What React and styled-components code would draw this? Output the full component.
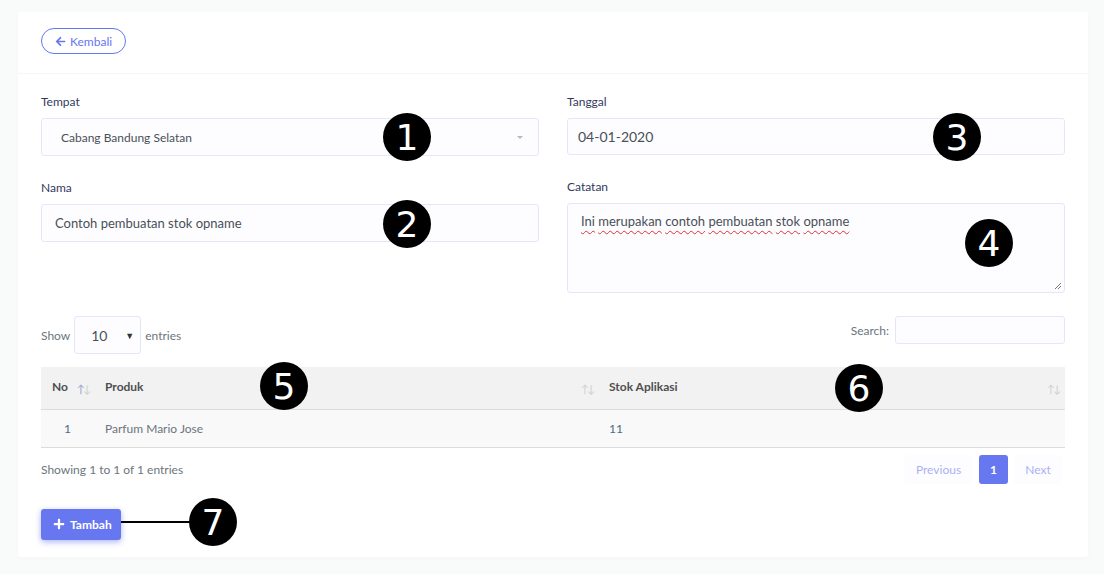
import React from "react";
import styled, { createGlobalStyle } from "styled-components";

const GlobalStyle = createGlobalStyle`
  html, body { margin: 0; padding: 0; }
  body {
    background: #f9fafa;
    font-family: "Lato", "Noto Sans", sans-serif;
    color: #34395e;
  }
  * { box-sizing: border-box; }
`;

const Page = styled.div`
  position: relative;
  width: 1104px;
  height: 574px;
  padding: 12px 16px 0 18px;
`;

const Card = styled.div`
  background: #fff;
  border-radius: 3px;
  width: 1070px;
  height: 545px;
  box-shadow: 0 2px 4px rgba(0, 0, 0, 0.02);
`;

const CardHeader = styled.div`
  height: 62px;
  padding: 16px 23px 0;
  border-bottom: 1px solid #f6f6f8;
`;

const OutlineButton = styled.button`
  display: inline-flex;
  align-items: center;
  gap: 4px;
  height: 26px;
  padding: 0 13px 0 13px;
  border: 1px solid #6777ef;
  border-radius: 14px;
  background: #fff;
  color: #6777ef;
  font-family: inherit;
  font-size: 12px;
  cursor: pointer;
`;

const CardBody = styled.div`
  padding: 20px 23px 0;
`;

const FormGrid = styled.div`
  display: grid;
  grid-template-columns: 498px 498px;
  column-gap: 28px;
  margin-bottom: 23px;
`;

const Column = styled.div`
  display: flex;
  flex-direction: column;
  gap: 24px;
`;

const Group = styled.div`
  display: flex;
  flex-direction: column;
  gap: 8px;
`;

const Label = styled.label`
  font-size: 12px;
  line-height: 16px;
  color: #34395e;
`;

const Field = styled.div`
  position: relative;
  display: flex;
  align-items: ${(p) => (p.$multi ? "flex-start" : "center")};
  height: ${(p) => p.$h || 38}px;
  padding: ${(p) => (p.$multi ? "9px 13px" : `0 ${p.$pad || 13}px`)};
  background: #fdfdff;
  border: 1px solid #e4e6fc;
  border-radius: 3px;
  font-size: ${(p) => p.$fs || 13}px;
  color: #495057;
`;

const Caret = styled.span`
  position: absolute;
  right: 15px;
  top: 50%;
  margin-top: -1px;
  width: 0;
  height: 0;
  border-left: 3px solid transparent;
  border-right: 3px solid transparent;
  border-top: 3px solid #b9b9b9;
`;

const Resize = styled.svg`
  position: absolute;
  right: 2px;
  bottom: 2px;
`;

const Wavy = styled.span`
  text-decoration: underline wavy #e03131;
  text-decoration-thickness: 1px;
  text-underline-offset: 4px;
`;

const Controls = styled.div`
  display: flex;
  justify-content: space-between;
  align-items: flex-start;
  margin-bottom: 13px;
  font-size: 12px;
  color: #6c757d;
`;

const Inline = styled.div`
  display: flex;
  align-items: center;
  gap: ${(p) => p.$gap || 4}px;
`;

const SmallSelect = styled.div`
  display: flex;
  align-items: center;
  justify-content: space-between;
  width: 67px;
  height: 38px;
  padding: 0 6px 0 16px;
  background: #fdfdff;
  border: 1px solid #e4e6fc;
  border-radius: 3px;
  font-size: 14px;
  color: #495057;
`;

const BlackCaret = styled.span`
  font-size: 9px;
  color: #333;
`;

const SearchInput = styled.div`
  width: 170px;
  height: 28px;
  background: #fdfdff;
  border: 1px solid #e4e6fc;
  border-radius: 3px;
`;

const Table = styled.table`
  width: 100%;
  border-collapse: collapse;
  font-size: 12px;
`;

const Th = styled.th`
  position: relative;
  height: 42px;
  background: #f2f2f2;
  border-bottom: 1px solid #dcdcdc;
  text-align: left;
  font-weight: 700;
  color: #4f4f4f;
  padding: 0 10px 2px ${(p) => p.$pl || 10}px;
  width: ${(p) => p.$w || "auto"};
`;

const SortIcon = styled.span`
  position: absolute;
  right: ${(p) => p.$r || 5}px;
  top: 15px;
  font-size: 11px;
  font-weight: 400;
  letter-spacing: -2px;
  color: #d0d0d0;
`;

const Up = styled.span`
  color: ${(p) => (p.$active ? "#9aa3c8" : "#d0d0d0")};
`;

const Td = styled.td`
  height: 38px;
  background: #f9f9f9;
  border-bottom: 1px solid #dcdcdc;
  padding: 0 10px 0 ${(p) => p.$pl || 10}px;
  color: ${(p) => p.$color || "#6c757d"};
`;

const Footer = styled.div`
  display: flex;
  justify-content: space-between;
  align-items: center;
  margin-top: 7px;
  padding-right: 3px;
  font-size: 12px;
  color: #6c757d;
`;

const Pager = styled.div`
  display: flex;
  gap: 6px;
`;

const PageButton = styled.div`
  display: flex;
  align-items: center;
  justify-content: center;
  height: 29px;
  min-width: ${(p) => p.$w}px;
  border-radius: 3px;
  font-size: 12px;
  background: ${(p) => (p.$active ? "#6777ef" : "#fdfdff")};
  color: ${(p) => (p.$active ? "#fff" : "#aab0f5")};
  font-weight: ${(p) => (p.$active ? 700 : 400)};
`;

const PrimaryButton = styled.button`
  display: inline-flex;
  align-items: center;
  gap: 5px;
  margin-top: 25px;
  height: 31px;
  width: 80px;
  padding: 0 0 0 12px;
  border: none;
  border-radius: 3px;
  background: #6777ef;
  color: #fff;
  font-family: inherit;
  font-size: 12px;
  font-weight: 700;
  box-shadow: 0 2px 6px #acb5f6;
`;

const Badge = styled.div`
  position: absolute;
  left: ${(p) => p.$x - 24}px;
  top: ${(p) => p.$y - 24}px;
  width: 48px;
  height: 48px;
  border-radius: 50%;
  background: #000;
  color: #fff;
  display: flex;
  align-items: center;
  justify-content: center;
  font-family: "DejaVu Sans", sans-serif;
  font-size: 36px;
  line-height: 1;
  padding-top: 1px;
`;

const Connector = styled.div`
  position: absolute;
  left: 121px;
  top: 521px;
  width: 70px;
  height: 1.5px;
  background: #000;
`;

const ArrowLeft = () => (
  <svg width="11" height="11" viewBox="0 0 448 512" fill="currentColor">
    <path d="M257.5 445.1l-22.2 22.2c-9.4 9.4-24.6 9.4-33.9 0L7 273c-9.4-9.4-9.4-24.6 0-33.9L201.4 44.7c9.4-9.4 24.6-9.4 33.9 0l22.2 22.2c9.5 9.5 9.3 25-.4 34.3L136.6 216H424c13.3 0 24 10.7 24 24v32c0 13.3-10.7 24-24 24H136.6l120.5 114.8c9.8 9.3 10 24.8.4 34.3z" />
  </svg>
);

const Plus = () => (
  <svg width="12" height="12" viewBox="0 0 448 512" fill="currentColor">
    <path d="M416 208H272V64c0-17.67-14.33-32-32-32h-32c-17.67 0-32 14.33-32 32v144H32c-17.67 0-32 14.33-32 32v32c0 17.67 14.33 32 32 32h144v144c0 17.67 14.33 32 32 32h32c17.67 0 32-14.33 32-32V304h144c17.67 0 32-14.33 32-32v-32c0-17.67-14.33-32-32-32z" />
  </svg>
);

const badges = [
  { n: 1, x: 407, y: 137 },
  { n: 2, x: 407, y: 224 },
  { n: 3, x: 957, y: 137 },
  { n: 4, x: 989, y: 243 },
  { n: 5, x: 284, y: 386 },
  { n: 6, x: 859, y: 388 },
  { n: 7, x: 213, y: 522 },
];

export default function App() {
  const note = "Ini merupakan contoh pembuatan stok opname".split(" ");
  return (
    <>
      <GlobalStyle />
      <Page>
        <Card>
          <CardHeader>
            <OutlineButton>
              <ArrowLeft />
              Kembali
            </OutlineButton>
          </CardHeader>
          <CardBody>
            <FormGrid>
              <Column>
                <Group>
                  <Label>Tempat</Label>
                  <Field $fs={12} $pad={19}>
                    Cabang Bandung Selatan
                    <Caret />
                  </Field>
                </Group>
                <Group>
                  <Label>Nama</Label>
                  <Field>Contoh pembuatan stok opname</Field>
                </Group>
              </Column>
              <Column>
                <Group>
                  <Label>Tanggal</Label>
                  <Field $h={37} $pad={10} $fs={14}>
                    04-01-2020
                  </Field>
                </Group>
                <Group>
                  <Label>Catatan</Label>
                  <Field $multi $h={90}>
                    <span>
                      {note.map((w, i) => (
                        <React.Fragment key={i}>
                          <Wavy>{w}</Wavy>
                          {i < note.length - 1 ? " " : ""}
                        </React.Fragment>
                      ))}
                    </span>
                    <Resize width="8" height="8" viewBox="0 0 8 8">
                      <path d="M7 1L1 7M7 4L4 7" stroke="#777" strokeWidth="1" />
                    </Resize>
                  </Field>
                </Group>
              </Column>
            </FormGrid>

            <Controls>
              <Inline>
                Show
                <SmallSelect>
                  10
                  <BlackCaret>▼</BlackCaret>
                </SmallSelect>
                entries
              </Inline>
              <Inline $gap={6}>
                <span>Search:</span>
                <SearchInput />
              </Inline>
            </Controls>

            <Table>
              <thead>
                <tr>
                  <Th $w="54px" $pl={11}>
                    No
                    <SortIcon $r={6}>
                      <Up $active>↑</Up>↓
                    </SortIcon>
                  </Th>
                  <Th $w="504px">
                    Produk
                    <SortIcon $r={6}>↑↓</SortIcon>
                  </Th>
                  <Th>
                    Stok Aplikasi
                    <SortIcon $r={6}>↑↓</SortIcon>
                  </Th>
                </tr>
              </thead>
              <tbody>
                <tr>
                  <Td $pl={23} $color="#4d6a8a">1</Td>
                  <Td>Parfum Mario Jose</Td>
                  <Td $color="#4d6a8a">11</Td>
                </tr>
              </tbody>
            </Table>

            <Footer>
              <span>Showing 1 to 1 of 1 entries</span>
              <Pager>
                <PageButton $w={69}>Previous</PageButton>
                <PageButton $w={29} $active>
                  1
                </PageButton>
                <PageButton $w={48}>Next</PageButton>
              </Pager>
            </Footer>

            <PrimaryButton>
              <Plus />
              Tambah
            </PrimaryButton>
          </CardBody>
        </Card>

        <Connector />
        {badges.map((b) => (
          <Badge key={b.n} $x={b.x} $y={b.y}>
            {b.n}
          </Badge>
        ))}
      </Page>
    </>
  );
}
